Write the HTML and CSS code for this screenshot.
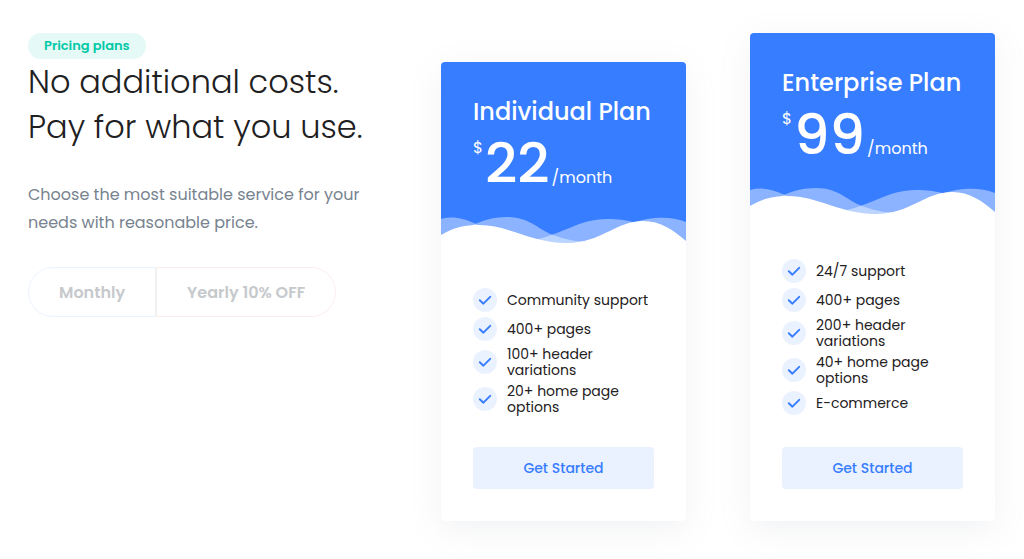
FILE: index.html
```html
<!DOCTYPE html>
<html lang="en">
<head>
<meta charset="utf-8">
<meta name="viewport" content="width=device-width, initial-scale=1">
<title>Pricing plans</title>
<link rel="stylesheet" href="styles.css">
</head>
<body>
<svg class="sprite" aria-hidden="true">
  <symbol id="waves" viewBox="0 0 245 28" preserveAspectRatio="none">
    <path fill="#fff" fill-opacity=".42" d="M0 3C12 0 22 2 35 8C55 17 72 27 92 24C120 19 138 3 166 3C178 3 184 4 192 6C212 12 225 22 245 27V28H0Z"/>
    <path fill="#fff" fill-opacity=".42" d="M0 19C24 18 35 1 66 1C90 1 98 15 115 20C126 24 136 26 146 25C172 20 188 6 206 3C220 1 232 1 245 6V28H0Z"/>
    <path fill="#fff" d="M0 19C14 11 24 9 38 9C68 9 90 27 126 27C160 27 175 5 202 5C220 5 232 14 245 25V28H0Z"/>
  </symbol>
  <symbol id="check" viewBox="0 0 24 24">
    <circle cx="12" cy="12" r="12" fill="#eaf1ff"/>
    <path d="M6.8 12.2L10.4 15.7L17.2 8.8" fill="none" stroke="#377dff" stroke-width="1.9" stroke-linecap="round" stroke-linejoin="round"/>
  </symbol>
</svg>
<main class="pricing">
  <section class="intro">
    <span class="badge">Pricing plans</span>
    <h1 class="headline">No additional costs.<br>Pay for what you use.</h1>
    <p class="lead">Choose the most suitable service for your needs with reasonable price.</p>
    <div class="toggle" role="group" aria-label="Billing period">
      <button class="toggle-option" type="button">Monthly</button>
      <button class="toggle-option toggle-yearly" type="button">Yearly 10% OFF</button>
    </div>
  </section>

  <article class="card">
    <header class="card-header">
      <h2 class="plan">Individual Plan</h2>
      <p class="price"><span class="currency">$</span><span class="amount">22</span><span class="period">/month</span></p>
      <svg class="waves" aria-hidden="true"><use href="#waves"/></svg>
    </header>
    <div class="card-body">
      <ul class="features">
        <li class="feature"><svg class="check" aria-hidden="true"><use href="#check"/></svg><span>Community support</span></li>
        <li class="feature"><svg class="check" aria-hidden="true"><use href="#check"/></svg><span>400+ pages</span></li>
        <li class="feature"><svg class="check" aria-hidden="true"><use href="#check"/></svg><span>100+ header variations</span></li>
        <li class="feature"><svg class="check" aria-hidden="true"><use href="#check"/></svg><span>20+ home page options</span></li>
      </ul>
      <button class="start" type="button">Get Started</button>
    </div>
  </article>

  <article class="card">
    <header class="card-header">
      <h2 class="plan">Enterprise Plan</h2>
      <p class="price"><span class="currency">$</span><span class="amount">99</span><span class="period">/month</span></p>
      <svg class="waves" aria-hidden="true"><use href="#waves"/></svg>
    </header>
    <div class="card-body">
      <ul class="features">
        <li class="feature"><svg class="check" aria-hidden="true"><use href="#check"/></svg><span>24/7 support</span></li>
        <li class="feature"><svg class="check" aria-hidden="true"><use href="#check"/></svg><span>400+ pages</span></li>
        <li class="feature"><svg class="check" aria-hidden="true"><use href="#check"/></svg><span>200+ header variations</span></li>
        <li class="feature"><svg class="check" aria-hidden="true"><use href="#check"/></svg><span>40+ home page options</span></li>
        <li class="feature"><svg class="check" aria-hidden="true"><use href="#check"/></svg><span>E-commerce</span></li>
      </ul>
      <button class="start" type="button">Get Started</button>
    </div>
  </article>
</main>
</body>
</html>
```
FILE: styles.css
```css
* { box-sizing: border-box; }
body {
  margin: 0;
  background: #fff;
  color: #1e2022;
  font-family: Poppins, Inter, "Liberation Sans", sans-serif;
}
h1, h2, p, ul { margin: 0; padding: 0; }
button { font: inherit; cursor: pointer; }
.sprite { position: absolute; width: 0; height: 0; }

.pricing {
  display: grid;
  grid-template-columns: 349fr 245fr 245fr;
  gap: 64px;
  align-items: end;
  padding: 33px 29px 38px 28px;
}
.intro { align-self: start; display: flex; flex-direction: column; align-items: flex-start; }
.badge {
  padding: 0 16px;
  border-radius: 13px;
  background: #e5f9f6;
  color: #00c9a7;
  font-size: 13px;
  font-weight: 600;
  line-height: 26px;
}
.headline { font-size: 32px; font-weight: 300; line-height: 45px; white-space: nowrap; }
.lead { margin-top: 32px; color: #77838f; font-size: 16px; line-height: 28px; }
.toggle { display: flex; margin-top: 30px; }
.toggle-option {
  height: 50px;
  padding: 0 30px;
  border: 1px solid #edf3ff;
  border-right: 0;
  border-radius: 25px 0 0 25px;
  background: #fff;
  color: #c6c9cc;
  font-size: 16px;
  font-weight: 600;
}
.toggle-yearly {
  border: 1px solid #fdeeee;
  border-left: 2px solid #f1f1f3;
  border-radius: 0 25px 25px 0;
}

.card { border-radius: 4px; background: #fff; box-shadow: 0 8px 32px rgba(140, 152, 164, .12); }
.card-header {
  display: flex;
  flex-direction: column;
  padding-top: 32px;
  border-radius: 4px 4px 0 0;
  background: #377dff;
  color: #fff;
}
.plan { padding: 0 32px; font-size: 24px; font-weight: 500; line-height: 36px; white-space: nowrap; }
.price { display: flex; align-items: baseline; height: 86px; padding: 6px 32px 0; }
.currency { align-self: flex-start; font-size: 16px; line-height: 24px; }
.amount { margin: 0 2px; font-size: 56px; font-weight: 500; line-height: 56px; }
.period { font-size: 16px; }
.waves { display: block; width: 100%; height: 28px; margin-bottom: -1px; }
.card-body { padding: 45px 32px 32px; }
.features { display: grid; gap: 5px; list-style: none; }
.feature { display: flex; align-items: center; gap: 10px; font-size: 14px; line-height: 16px; }
.check { flex: none; width: 24px; height: 24px; }
.start {
  width: 100%;
  height: 42px;
  margin-top: 32px;
  border: 0;
  border-radius: 4px;
  background: #eaf1ff;
  color: #377dff;
  font-size: 14px;
  font-weight: 500;
}
```
